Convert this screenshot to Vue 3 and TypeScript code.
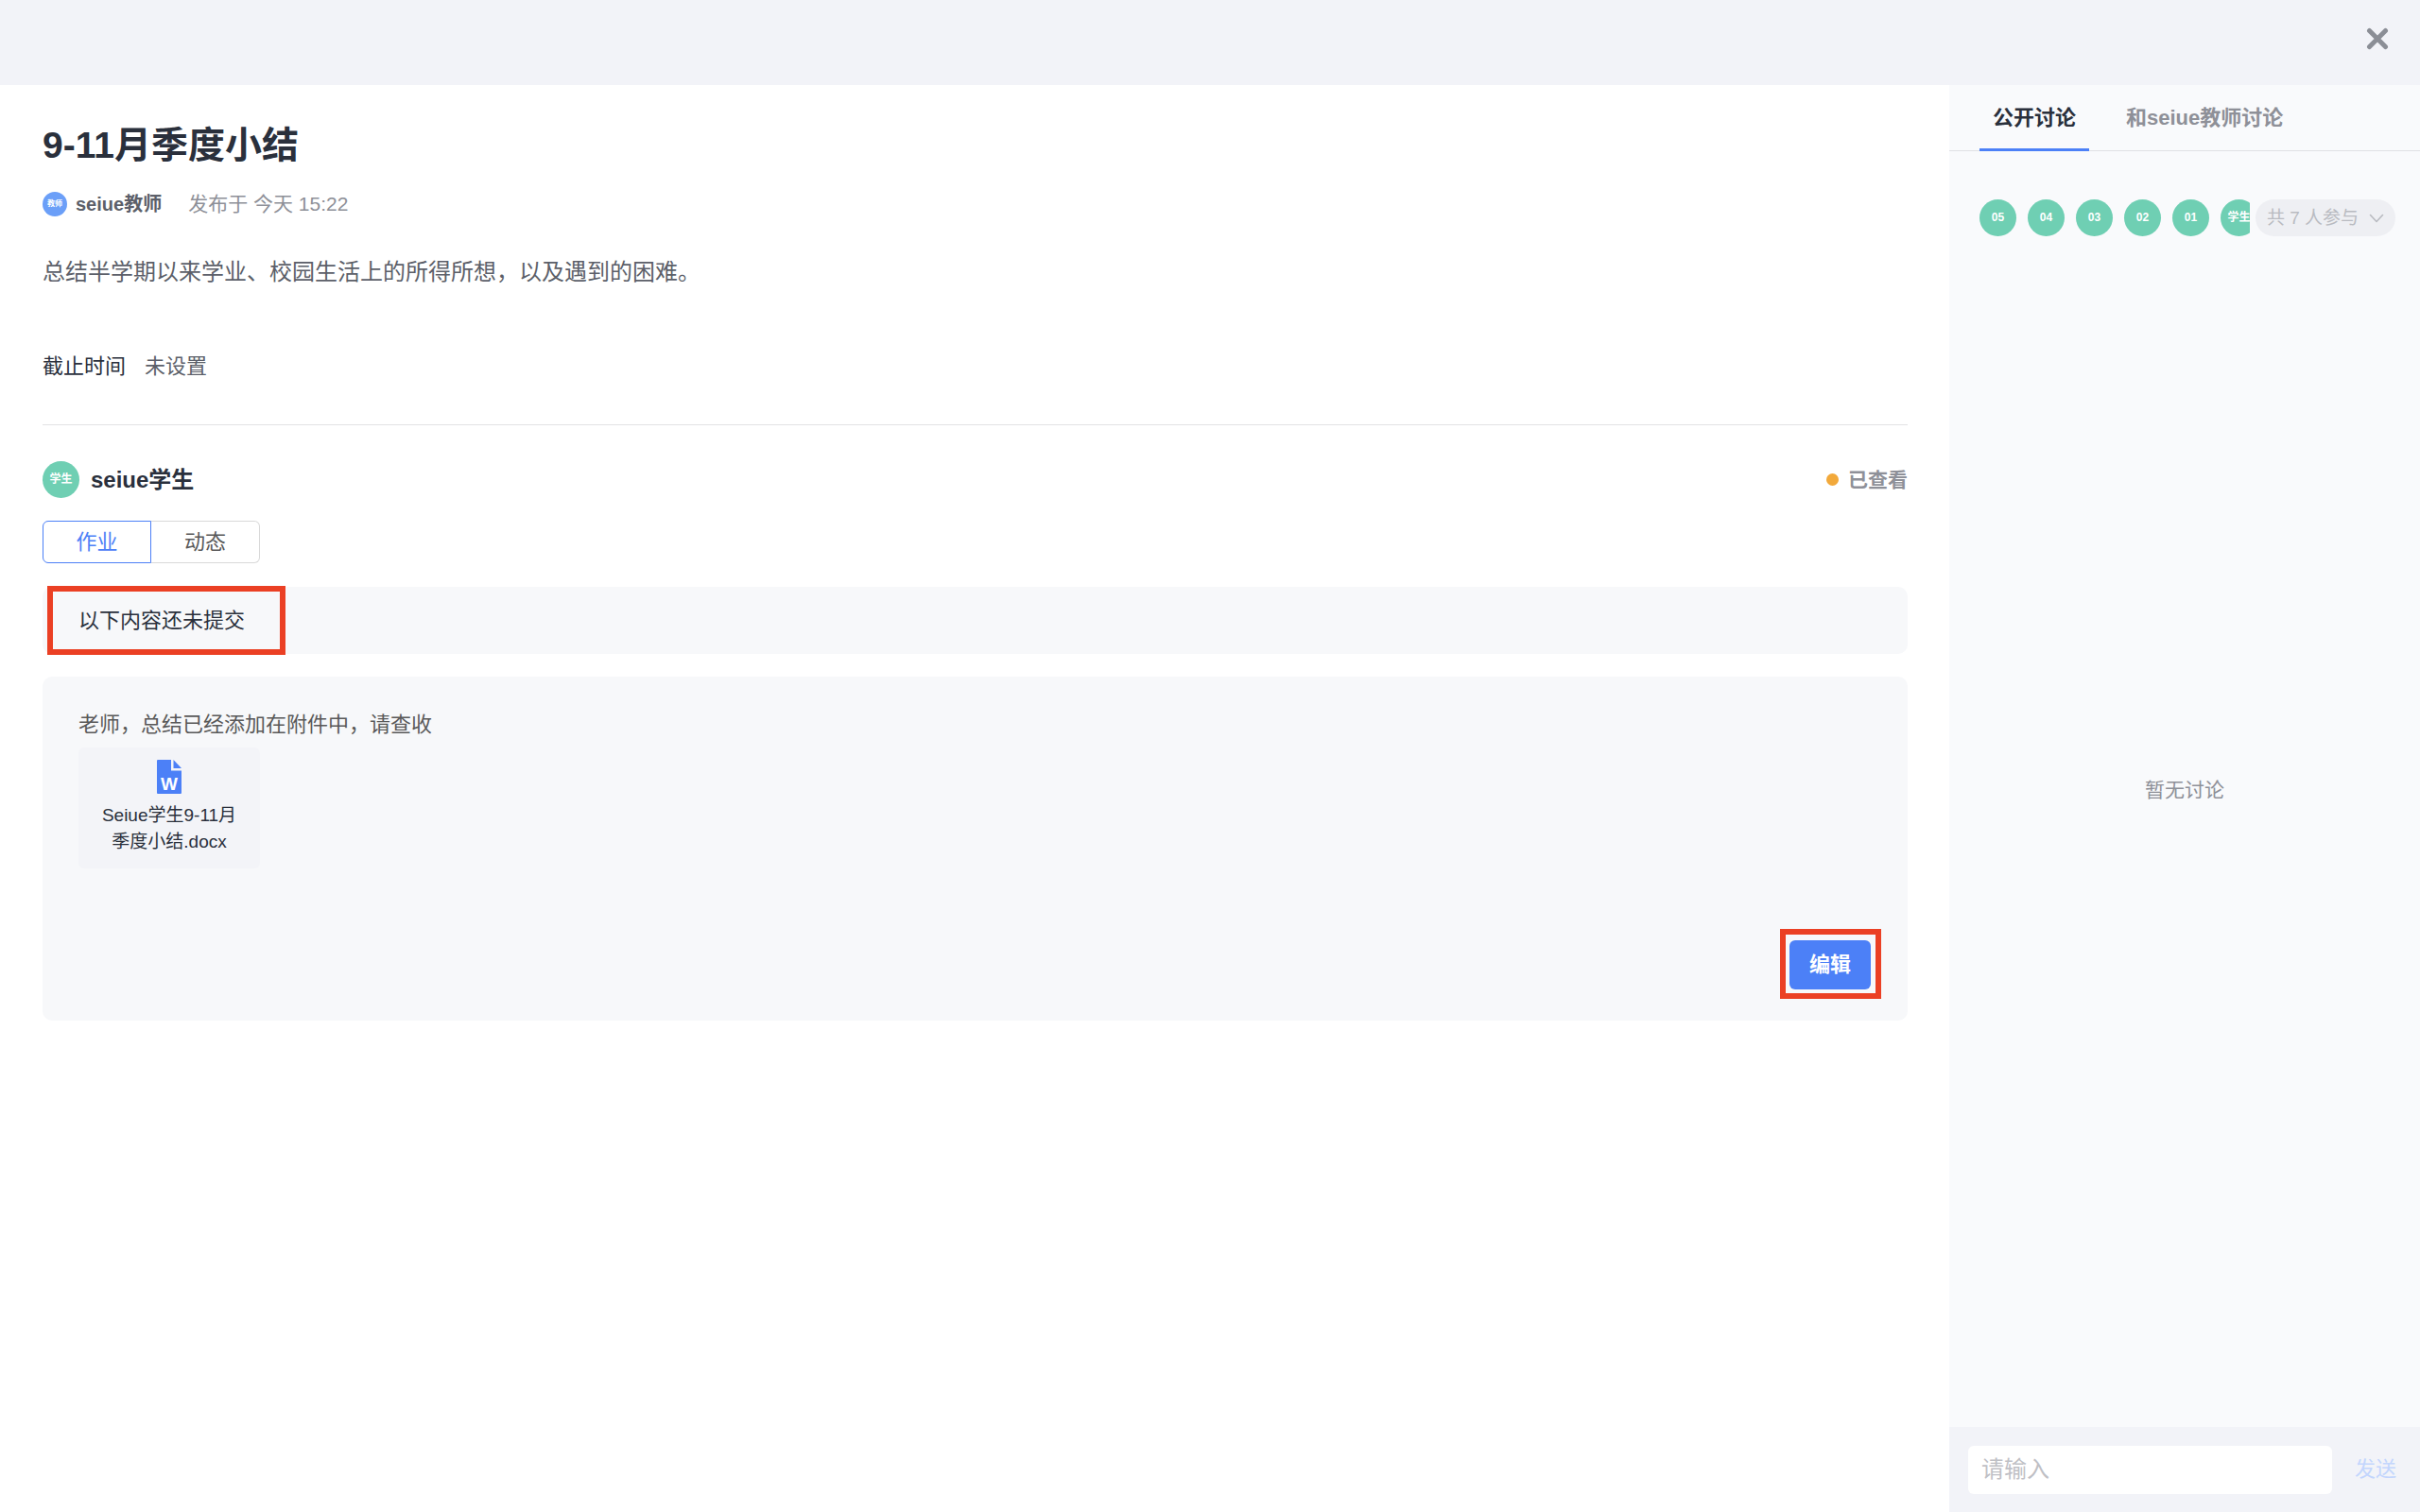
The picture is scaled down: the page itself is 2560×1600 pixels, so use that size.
<script setup lang="ts">
import { ref } from 'vue'

interface Participant {
  id: number
  label: string
}

const participants: Participant[] = [
  { id: 1, label: '05' },
  { id: 2, label: '04' },
  { id: 3, label: '03' },
  { id: 4, label: '02' },
  { id: 5, label: '01' },
  { id: 6, label: '学生' },
]

const workTabs: string[] = ['作业', '动态']
const activeWorkTab = ref<number>(0)

const talkTabs: string[] = ['公开讨论', '和seiue教师讨论']
const activeTalkTab = ref<number>(0)

const message = ref<string>('')
</script>

<template>
  <div class="page">
    <header class="topbar">
      <button class="close" type="button" aria-label="关闭">
        <svg viewBox="0 0 24 24" width="24" height="24" aria-hidden="true">
          <path d="M3.5 3.5 20.5 20.5M20.5 3.5 3.5 20.5" fill="none" stroke="#8b8e96" stroke-width="5" stroke-linecap="round" />
        </svg>
      </button>
    </header>

    <div class="body">
      <main class="main">
        <h1 class="title">9-11月季度小结</h1>
        <div class="meta">
          <span class="avatar avatar-teacher">教师</span>
          <span class="author">seiue教师</span>
          <span class="published">发布于 今天 15:22</span>
        </div>
        <p class="description">总结半学期以来学业、校园生活上的所得所想，以及遇到的困难。</p>
        <dl class="deadline">
          <dt>截止时间</dt>
          <dd>未设置</dd>
        </dl>

        <section class="work">
          <div class="student-row">
            <span class="avatar">学生</span>
            <h2 class="student-name">seiue学生</h2>
            <span class="status"><i class="dot"></i>已查看</span>
          </div>

          <div class="segment">
            <button
              v-for="(tab, index) in workTabs"
              :key="tab"
              type="button"
              class="segment-item"
              :class="{ active: index === activeWorkTab }"
              @click="activeWorkTab = index"
            >{{ tab }}</button>
          </div>

          <div class="notice">
            以下内容还未提交
            <span class="mark mark-notice"></span>
          </div>

          <article class="submission">
            <p class="answer">老师，总结已经添加在附件中，请查收</p>
            <a class="file" href="#">
              <svg class="file-icon" viewBox="0 0 26 36" width="26" height="36" aria-hidden="true">
                <path d="M1 0H15V11.500H26V35Q26 36 25 36H1Q0 36 0 35V1Q0 0 1 0Z" fill="#4c80f7" />
                <path d="M17.500 0 26 9H17.500Z" fill="#4c80f7" />
                <text x="13" y="32" text-anchor="middle" font-size="19" font-weight="700" fill="#fff">W</text>
              </svg>
              <span>Seiue学生9-11月季度小结.docx</span>
            </a>
            <div class="actions">
              <div class="edit-wrap">
                <button class="edit" type="button">编辑</button>
                <span class="mark mark-edit"></span>
              </div>
            </div>
          </article>
        </section>
      </main>

      <aside class="side">
        <nav class="talk-tabs">
          <button
            v-for="(tab, index) in talkTabs"
            :key="tab"
            type="button"
            class="talk-tab"
            :class="{ active: index === activeTalkTab }"
            @click="activeTalkTab = index"
          >{{ tab }}</button>
        </nav>

        <div class="people">
          <div class="people-list">
            <span v-for="person in participants" :key="person.id" class="avatar">{{ person.label }}</span>
          </div>
          <button class="people-count" type="button">
            共 7 人参与
            <svg viewBox="0 0 16 10" width="16" height="10" aria-hidden="true">
              <path d="M1.500 1.500 8 8.500 14.500 1.500" fill="none" stroke="#b9bbc1" stroke-width="1.600" stroke-linecap="round" stroke-linejoin="round" />
            </svg>
          </button>
        </div>

        <p class="empty">暂无讨论</p>

        <form class="composer" @submit.prevent>
          <input v-model="message" class="composer-input" type="text" placeholder="请输入" aria-label="请输入" />
          <button class="send" type="submit">发送</button>
        </form>
      </aside>
    </div>
  </div>
</template>

<style>
body {
  margin: 0;
}
</style>

<style scoped>
.page,
.page * {
  box-sizing: border-box;
}

.page {
  display: flex;
  flex-direction: column;
  min-height: 100vh;
  background: #fff;
  color: #2a303c;
  font-family: "Liberation Sans", "Noto Sans CJK SC", sans-serif;
  font-size: 22px;
  line-height: 32px;
}

button {
  margin: 0;
  padding: 0;
  border: 0;
  background: none;
  color: inherit;
  font: inherit;
  cursor: pointer;
}

h1,
h2,
p,
dl,
dd {
  margin: 0;
}

.topbar {
  display: flex;
  justify-content: flex-end;
  height: 90px;
  padding: 29px 33px;
  background: #f2f3f8;
}

.close {
  height: 24px;
  line-height: 0;
}

.body {
  display: flex;
  flex: 1;
}

.main {
  flex: 1;
  min-width: 0;
  padding: 39px 44px 39px 45px;
}

.title {
  font-size: 39px;
  line-height: 50px;
}

.meta {
  display: flex;
  align-items: center;
  margin-top: 21px;
}

.avatar {
  flex: none;
  width: 39px;
  height: 39px;
  border-radius: 50%;
  background: #6fcfb3;
  color: #fff;
  font-size: 12px;
  font-weight: 700;
  line-height: 39px;
  text-align: center;
}

.avatar-teacher {
  width: 26px;
  height: 26px;
  background: #6b9ff8;
  font-size: 8px;
  line-height: 26px;
}

.author {
  margin-left: 9px;
  color: #5c5f69;
  font-size: 20px;
  font-weight: 700;
}

.published {
  margin-left: 28px;
  color: #8e9098;
  font-size: 21px;
}

.description {
  margin-top: 38px;
  color: #5c5f69;
  font-size: 24px;
  line-height: 36px;
}

.deadline {
  display: flex;
  gap: 20px;
  margin-top: 66px;
}

.deadline dd {
  color: #5c5f69;
}

.work {
  margin-top: 45px;
  padding-top: 38px;
  border-top: 1px solid #e2e2e4;
}

.student-row {
  display: flex;
  align-items: center;
}

.student-name {
  margin-left: 12px;
  font-size: 24px;
}

.status {
  display: flex;
  align-items: center;
  gap: 10px;
  margin-left: auto;
  color: #8e9098;
  font-size: 21px;
  font-weight: 700;
}

.dot {
  width: 13px;
  height: 13px;
  border-radius: 50%;
  background: #f2a93b;
}

.segment {
  display: flex;
  margin-top: 24px;
}

.segment-item {
  width: 115px;
  height: 45px;
  border: 1px solid #d9d9d9;
  color: #595959;
}

.segment-item:first-child {
  border-radius: 6px 0 0 6px;
}

.segment-item:last-child {
  border-left: 0;
  border-radius: 0 6px 6px 0;
}

.segment-item.active {
  border: 1px solid #4c80f7;
  color: #4c80f7;
}

.notice {
  position: relative;
  margin-top: 25px;
  padding: 20px 38px 19px;
  border-radius: 10px;
  background: #f7f8fa;
}

.mark {
  position: absolute;
  border: 6px solid #eb4024;
  pointer-events: none;
}

.mark-notice {
  top: -1px;
  bottom: -1px;
  left: 5px;
  width: 252px;
}

.submission {
  margin-top: 24px;
  padding: 35px 39px 33px 38px;
  border-radius: 10px;
  background: #f7f8fa;
}

.answer {
  color: #595959;
}

.file {
  display: flex;
  flex-direction: column;
  align-items: center;
  width: 192px;
  height: 128px;
  margin-top: 8px;
  padding: 13px 20px 0;
  border-radius: 6px;
  background: #f3f4f8;
  color: #2a303c;
  font-size: 19px;
  line-height: 28px;
  text-align: center;
  text-decoration: none;
  word-break: break-all;
}

.file-icon {
  flex: none;
  margin-bottom: 9px;
}

.actions {
  display: flex;
  justify-content: flex-end;
  margin-top: 76px;
}

.edit-wrap {
  position: relative;
}

.edit {
  display: block;
  width: 86px;
  height: 52px;
  border-radius: 6px;
  background: #4c80f7;
  color: #fff;
  font-weight: 700;
}

.mark-edit {
  top: -12px;
  right: -11px;
  bottom: -10px;
  left: -10px;
}

.side {
  display: flex;
  flex: none;
  flex-direction: column;
  width: 498px;
  background: #f9fafc;
}

.talk-tabs {
  display: flex;
  gap: 25px;
  height: 70px;
  padding: 0 32px;
  border-bottom: 1px solid #e0e1e4;
}

.talk-tab {
  height: 70px;
  padding: 3px 14px 0;
  border-bottom: 3px solid transparent;
  color: #8e9098;
  font-weight: 700;
}

.talk-tab.active {
  border-bottom-color: #4c80f7;
  color: #2a303c;
}

.people {
  display: flex;
  gap: 6px;
  padding: 51px 26px 0 32px;
}

.people-list {
  display: flex;
  flex: 1;
  gap: 12px;
  min-width: 0;
  overflow: hidden;
}

.people-count {
  display: flex;
  flex: none;
  align-items: center;
  justify-content: center;
  gap: 11px;
  width: 148px;
  height: 39px;
  border-radius: 20px;
  background: #eeeff3;
  color: #b9bbc1;
  font-size: 19px;
}

.empty {
  display: flex;
  flex: 1;
  align-items: center;
  justify-content: center;
  padding-bottom: 89px;
  color: #8e9098;
  font-size: 21px;
}

.composer {
  display: flex;
  align-items: center;
  gap: 24px;
  height: 90px;
  padding: 0 25px 0 20px;
  background: #f2f3f8;
}

.composer-input {
  flex: 1;
  min-width: 0;
  height: 51px;
  padding: 0 14px;
  border: 0;
  border-radius: 6px;
  outline: 0;
  background: #fff;
  color: #2a303c;
  font: inherit;
  font-size: 24px;
}

.composer-input::placeholder {
  color: #bfc0c5;
  opacity: 1;
}

.send {
  color: #c3d6fd;
}
</style>
